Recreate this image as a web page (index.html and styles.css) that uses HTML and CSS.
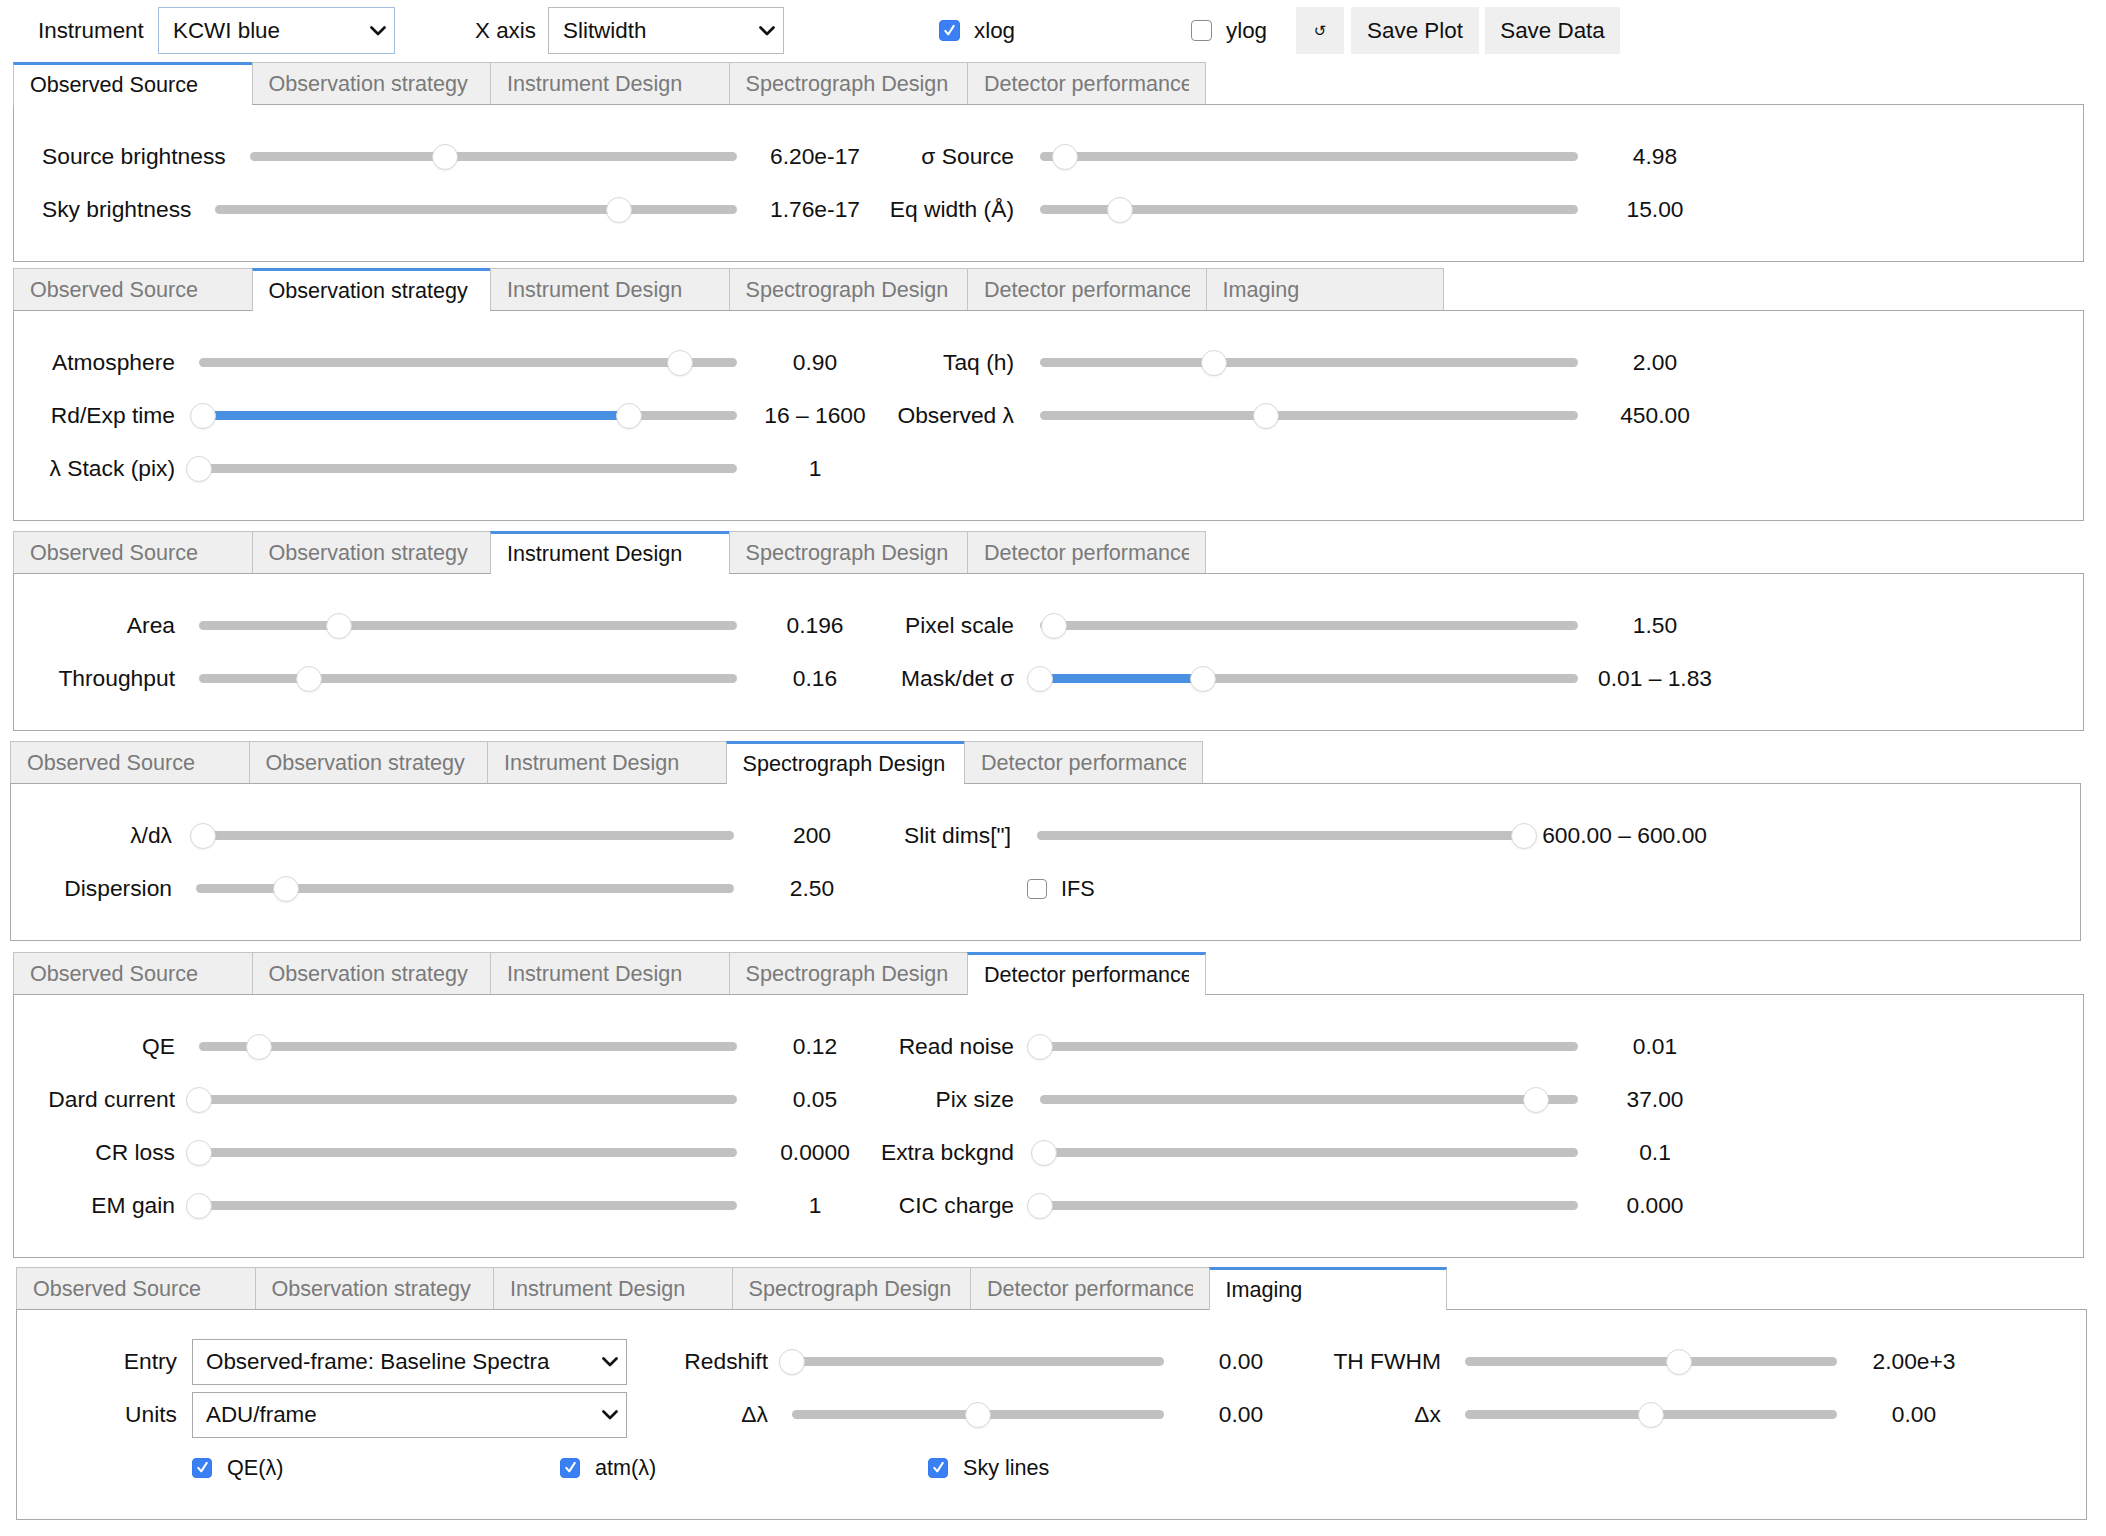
FILE: index.html
```html
<!DOCTYPE html>
<html lang="en">
<head>
<meta charset="utf-8">
<title>Exposure time calculator</title>
<link rel="stylesheet" href="styles.css">
</head>
<body>
<div class="topbar">
  <div class="field f-instr"><span class="lbl">Instrument</span><div class="select sel-instr"><span>KCWI blue</span><svg class="chev" viewBox="0 0 16 10"><polyline points="1.5,1.5 8,8 14.5,1.5"/></svg></div></div>
  <div class="field f-xaxis"><span class="lbl">X axis</span><div class="select sel-x"><span>Slitwidth</span><svg class="chev" viewBox="0 0 16 10"><polyline points="1.5,1.5 8,8 14.5,1.5"/></svg></div></div>
  <label class="check c-xlog"><span class="box on"><svg viewBox="0 0 20 20"><path d="M5 10.5 L8.5 14.5 L15 4.5"/></svg></span>xlog</label>
  <label class="check c-ylog"><span class="box"></span>ylog</label>
  <button class="btn btn-reset">↺</button>
  <button class="btn btn-plot">Save Plot</button>
  <button class="btn btn-data">Save Data</button>
</div>

<section class="panel p1">
  <div class="tabs">
    <div class="tab active"><span>Observed Source</span></div>
    <div class="tab"><span>Observation strategy</span></div>
    <div class="tab"><span>Instrument Design</span></div>
    <div class="tab"><span>Spectrograph Design</span></div>
    <div class="tab"><span>Detector performance</span></div>
  </div>
  <div class="body">
    <div class="row">
      <div class="sw sw1"><span class="sl sl-left lw-src">Source brightness</span><div class="track"><span class="thumb" style="left:40%"></span></div><span class="val">6.20e-17</span></div>
      <div class="sw sw2"><span class="sl">σ Source</span><div class="track"><span class="thumb" style="left:4.6%"></span></div><span class="val">4.98</span></div>
    </div>
    <div class="row">
      <div class="sw sw1"><span class="sl sl-left lw-sky">Sky brightness</span><div class="track"><span class="thumb" style="left:77.4%"></span></div><span class="val">1.76e-17</span></div>
      <div class="sw sw2"><span class="sl">Eq width (Å)</span><div class="track"><span class="thumb" style="left:14.8%"></span></div><span class="val">15.00</span></div>
    </div>
  </div>
</section>

<section class="panel p2">
  <div class="tabs">
    <div class="tab"><span>Observed Source</span></div>
    <div class="tab active"><span>Observation strategy</span></div>
    <div class="tab"><span>Instrument Design</span></div>
    <div class="tab"><span>Spectrograph Design</span></div>
    <div class="tab"><span>Detector performance</span></div>
    <div class="tab"><span>Imaging</span></div>
  </div>
  <div class="body">
    <div class="row">
      <div class="sw sw1"><span class="sl">Atmosphere</span><div class="track"><span class="thumb" style="left:89.4%"></span></div><span class="val">0.90</span></div>
      <div class="sw sw2"><span class="sl">Taq (h)</span><div class="track"><span class="thumb" style="left:32.3%"></span></div><span class="val">2.00</span></div>
    </div>
    <div class="row">
      <div class="sw sw1"><span class="sl">Rd/Exp time</span><div class="track"><span class="fill" style="left:0.7%;width:79.2%"></span><span class="thumb" style="left:0.7%"></span><span class="thumb" style="left:79.9%"></span></div><span class="val">16 – 1600</span></div>
      <div class="sw sw2"><span class="sl">Observed λ</span><div class="track"><span class="thumb" style="left:42%"></span></div><span class="val">450.00</span></div>
    </div>
    <div class="row">
      <div class="sw sw1"><span class="sl">λ Stack (pix)</span><div class="track"><span class="thumb" style="left:0%"></span></div><span class="val">1</span></div>
    </div>
  </div>
</section>

<section class="panel p3">
  <div class="tabs">
    <div class="tab"><span>Observed Source</span></div>
    <div class="tab"><span>Observation strategy</span></div>
    <div class="tab active"><span>Instrument Design</span></div>
    <div class="tab"><span>Spectrograph Design</span></div>
    <div class="tab"><span>Detector performance</span></div>
  </div>
  <div class="body">
    <div class="row">
      <div class="sw sw1"><span class="sl">Area</span><div class="track"><span class="thumb" style="left:26%"></span></div><span class="val">0.196</span></div>
      <div class="sw sw2"><span class="sl">Pixel scale</span><div class="track"><span class="thumb" style="left:2.6%"></span></div><span class="val">1.50</span></div>
    </div>
    <div class="row">
      <div class="sw sw1"><span class="sl">Throughput</span><div class="track"><span class="thumb" style="left:20.4%"></span></div><span class="val">0.16</span></div>
      <div class="sw sw2"><span class="sl">Mask/det σ</span><div class="track"><span class="fill" style="left:0%;width:30.3%"></span><span class="thumb" style="left:0%"></span><span class="thumb" style="left:30.3%"></span></div><span class="val">0.01 – 1.83</span></div>
    </div>
  </div>
</section>

<section class="panel p4">
  <div class="tabs">
    <div class="tab"><span>Observed Source</span></div>
    <div class="tab"><span>Observation strategy</span></div>
    <div class="tab"><span>Instrument Design</span></div>
    <div class="tab active"><span>Spectrograph Design</span></div>
    <div class="tab"><span>Detector performance</span></div>
  </div>
  <div class="body">
    <div class="row">
      <div class="sw sw1"><span class="sl">λ/dλ</span><div class="track"><span class="thumb" style="left:1.3%"></span></div><span class="val">200</span></div>
      <div class="sw sw2"><span class="sl">Slit dims["]</span><div class="track"><span class="thumb" style="left:100%"></span></div><span class="val val-wide">600.00 – 600.00</span></div>
    </div>
    <div class="row">
      <div class="sw sw1"><span class="sl">Dispersion</span><div class="track"><span class="thumb" style="left:16.7%"></span></div><span class="val">2.50</span></div>
      <div class="sw sw2"><span class="sl sl-blank"></span><label class="check c-ifs"><span class="box box-sm"></span>IFS</label></div>
    </div>
  </div>
</section>

<section class="panel p5">
  <div class="tabs">
    <div class="tab"><span>Observed Source</span></div>
    <div class="tab"><span>Observation strategy</span></div>
    <div class="tab"><span>Instrument Design</span></div>
    <div class="tab"><span>Spectrograph Design</span></div>
    <div class="tab active"><span>Detector performance</span></div>
  </div>
  <div class="body">
    <div class="row">
      <div class="sw sw1"><span class="sl">QE</span><div class="track"><span class="thumb" style="left:11.2%"></span></div><span class="val">0.12</span></div>
      <div class="sw sw2"><span class="sl">Read noise</span><div class="track"><span class="thumb" style="left:0%"></span></div><span class="val">0.01</span></div>
    </div>
    <div class="row">
      <div class="sw sw1"><span class="sl">Dard current</span><div class="track"><span class="thumb" style="left:0%"></span></div><span class="val">0.05</span></div>
      <div class="sw sw2"><span class="sl">Pix size</span><div class="track"><span class="thumb" style="left:92.2%"></span></div><span class="val">37.00</span></div>
    </div>
    <div class="row">
      <div class="sw sw1"><span class="sl">CR loss</span><div class="track"><span class="thumb" style="left:0%"></span></div><span class="val">0.0000</span></div>
      <div class="sw sw2"><span class="sl">Extra bckgnd</span><div class="track"><span class="thumb" style="left:0.7%"></span></div><span class="val">0.1</span></div>
    </div>
    <div class="row">
      <div class="sw sw1"><span class="sl">EM gain</span><div class="track"><span class="thumb" style="left:0%"></span></div><span class="val">1</span></div>
      <div class="sw sw2"><span class="sl">CIC charge</span><div class="track"><span class="thumb" style="left:0%"></span></div><span class="val">0.000</span></div>
    </div>
  </div>
</section>

<section class="panel p6">
  <div class="tabs">
    <div class="tab"><span>Observed Source</span></div>
    <div class="tab"><span>Observation strategy</span></div>
    <div class="tab"><span>Instrument Design</span></div>
    <div class="tab"><span>Spectrograph Design</span></div>
    <div class="tab"><span>Detector performance</span></div>
    <div class="tab active"><span>Imaging</span></div>
  </div>
  <div class="body body-img">
    <div class="row">
      <div class="sw swa"><span class="sl">Entry</span><div class="select sel-img"><span>Observed-frame: Baseline Spectra</span><svg class="chev" viewBox="0 0 16 10"><polyline points="1.5,1.5 8,8 14.5,1.5"/></svg></div></div>
      <div class="sw swb"><span class="sl">Redshift</span><div class="track"><span class="thumb" style="left:0%"></span></div><span class="val">0.00</span></div>
      <div class="sw swc"><span class="sl">TH FWHM</span><div class="track"><span class="thumb" style="left:57.5%"></span></div><span class="val">2.00e+3</span></div>
    </div>
    <div class="row">
      <div class="sw swa"><span class="sl">Units</span><div class="select sel-img"><span>ADU/frame</span><svg class="chev" viewBox="0 0 16 10"><polyline points="1.5,1.5 8,8 14.5,1.5"/></svg></div></div>
      <div class="sw swb"><span class="sl">Δλ</span><div class="track"><span class="thumb" style="left:50%"></span></div><span class="val">0.00</span></div>
      <div class="sw swc"><span class="sl">Δx</span><div class="track"><span class="thumb" style="left:50%"></span></div><span class="val">0.00</span></div>
    </div>
    <div class="row row-checks">
      <label class="check c-opt"><span class="box box-sm on"><svg viewBox="0 0 20 20"><path d="M5 10.5 L8.5 14.5 L15 4.5"/></svg></span>QE(λ)</label>
      <label class="check c-opt"><span class="box box-sm on"><svg viewBox="0 0 20 20"><path d="M5 10.5 L8.5 14.5 L15 4.5"/></svg></span>atm(λ)</label>
      <label class="check c-opt"><span class="box box-sm on"><svg viewBox="0 0 20 20"><path d="M5 10.5 L8.5 14.5 L15 4.5"/></svg></span>Sky lines</label>
    </div>
  </div>
</section>
</body>
</html>
```

FILE: styles.css
```css
* { box-sizing: border-box; }
html, body { margin: 0; padding: 0; background: #fff; }
body {
  font-family: "Liberation Sans", Arial, Helvetica, sans-serif;
  font-size: 21.6px;
  color: #111;
  padding-top: 7px;
  width: 2106px;
}

/* top bar */
.topbar { display: flex; align-items: center; height: 47px; padding-left: 38px; font-size: 22.4px; }
.field { display: flex; align-items: center; justify-content: space-between; height: 47px; }
.f-instr { width: 357px; }
.f-xaxis { width: 309px; margin-left: 80px; }
.select {
  display: flex; align-items: center; justify-content: space-between;
  height: 47px; border: 1px solid #bcbcbc; background: #fff;
  padding: 0 8px 0 14px; white-space: nowrap;
}
.sel-instr { width: 237px; border-color: #a4bedd; }
.sel-x { width: 236px; }
.chev { width: 16px; height: 10px; flex: none; }
.chev polyline { fill: none; stroke: #111; stroke-width: 2.7; stroke-linecap: round; stroke-linejoin: round; }

.check { display: flex; align-items: center; gap: 14px; white-space: nowrap; }
.c-xlog { margin-left: 155px; width: 252px; }
.c-ylog { width: 105px; }
.box {
  flex: none; width: 21px; height: 21px; border-radius: 4px;
  border: 1px solid #8d8d8d; background: #fff;
  display: flex; align-items: center; justify-content: center;
}
.box.on { background: #3a80f4; border-color: #3479ee; }
.box svg { width: 17px; height: 17px; }
.box path { fill: none; stroke: #fff; stroke-width: 2.4; stroke-linecap: round; stroke-linejoin: round; }
.box-sm { width: 20px; height: 20px; }

.btn {
  height: 47px; border: none; background: #efefef; color: #111;
  font: inherit; padding: 0; text-align: center;
}
.btn-reset { width: 48px; font-family: "DejaVu Sans", sans-serif; font-size: 15px; }
.btn-plot { width: 128px; margin-left: 7px; }
.btn-data { width: 135px; margin-left: 6px; }

/* tab panels */
.panel { width: 2071px; margin-left: 13px; }
.p1 { margin-top: 8px; }
.p2 { margin-top: 6px; }
.p3 { margin-top: 10px; }
.p4 { margin-top: 10px; margin-left: 10px; }
.p5 { margin-top: 11px; }
.p6 { margin-top: 9px; margin-left: 16px; }

.tabs { display: flex; height: 42px; }
.tab {
  width: 238.5px; height: 42px; flex: none;
  background: #efefef; color: #7a7a7a;
  border-top: 1px solid #c4c4c4; border-left: 1px solid #c4c4c4;
  padding: 0 16px 0 16px;
  display: flex; align-items: center;
}
.tab:last-child { border-right: 1px solid #c4c4c4; }
.tab span { display: block; overflow: hidden; white-space: nowrap; width: 100%; }
.tab.active {
  background: #fff; color: #111;
  border-top: 3px solid #4a90e2;
  height: 43px; margin-bottom: -1px;
  position: relative; z-index: 1;
  padding-bottom: 1px;
}

.body { border: 1px solid #a9a9a9; padding: 25px 0 25px 16px; }
.row { display: flex; align-items: center; height: 53px; }

.sw { display: flex; align-items: center; flex: none; font-size: 22.8px; }
.sw1 { width: 840px; }
.sw2 { width: 830px; margin-left: 10px; }
.sl { flex: none; text-align: right; white-space: nowrap; }
.sw1 .sl { width: 145px; margin-right: 24px; }
.sw2 .sl { width: 134px; margin-right: 26px; }
.sw1 .sl-left { text-align: left; margin-left: 12px; }
.lw-src { width: 184px !important; }
.lw-sky { width: 149px !important; }
.sw2 .sl-blank { margin-right: 16px; }

.track {
  flex: 1; position: relative; height: 9px;
  border-radius: 5px; background: #c1c1c1;
}
.thumb {
  position: absolute; top: 50%;
  width: 26px; height: 26px; margin: -13px 0 0 -13px;
  border-radius: 50%; background: #fff;
  border: 1px solid #d8d8d8;
  box-shadow: 0 1px 2px rgba(0,0,0,0.06);
}
.fill { position: absolute; top: 0; bottom: 0; background: #4a90e2; }
.val {
  flex: none; width: 110px;
  display: flex; justify-content: center;
  white-space: nowrap;
}
.sw1 .val { margin-left: 23px; }
.sw2 .val { margin-left: 22px; }
.sw2 .val-wide { width: auto; margin-left: 18px; }

.c-ifs { font-size: 21.6px; }

/* imaging panel */
.body-img { padding-left: 0; }
.swa .sl { width: 160px; margin-right: 15px; }
.sel-img { width: 435px; height: 46px; border-color: #a9a9a9; padding-left: 13px; font-size: 22.4px; }
.swb { margin-left: 21px; }
.swb .sl, .swc .sl { width: 120px; margin-right: 24px; }
.swb .track, .swc .track { flex: none; width: 372px; }
.swb .val, .swc .val { margin-left: 22px; }
.swc { margin-left: 25px; }
.row-checks { padding-left: 175px; }
.c-opt { width: 368px; gap: 15px; }
```
